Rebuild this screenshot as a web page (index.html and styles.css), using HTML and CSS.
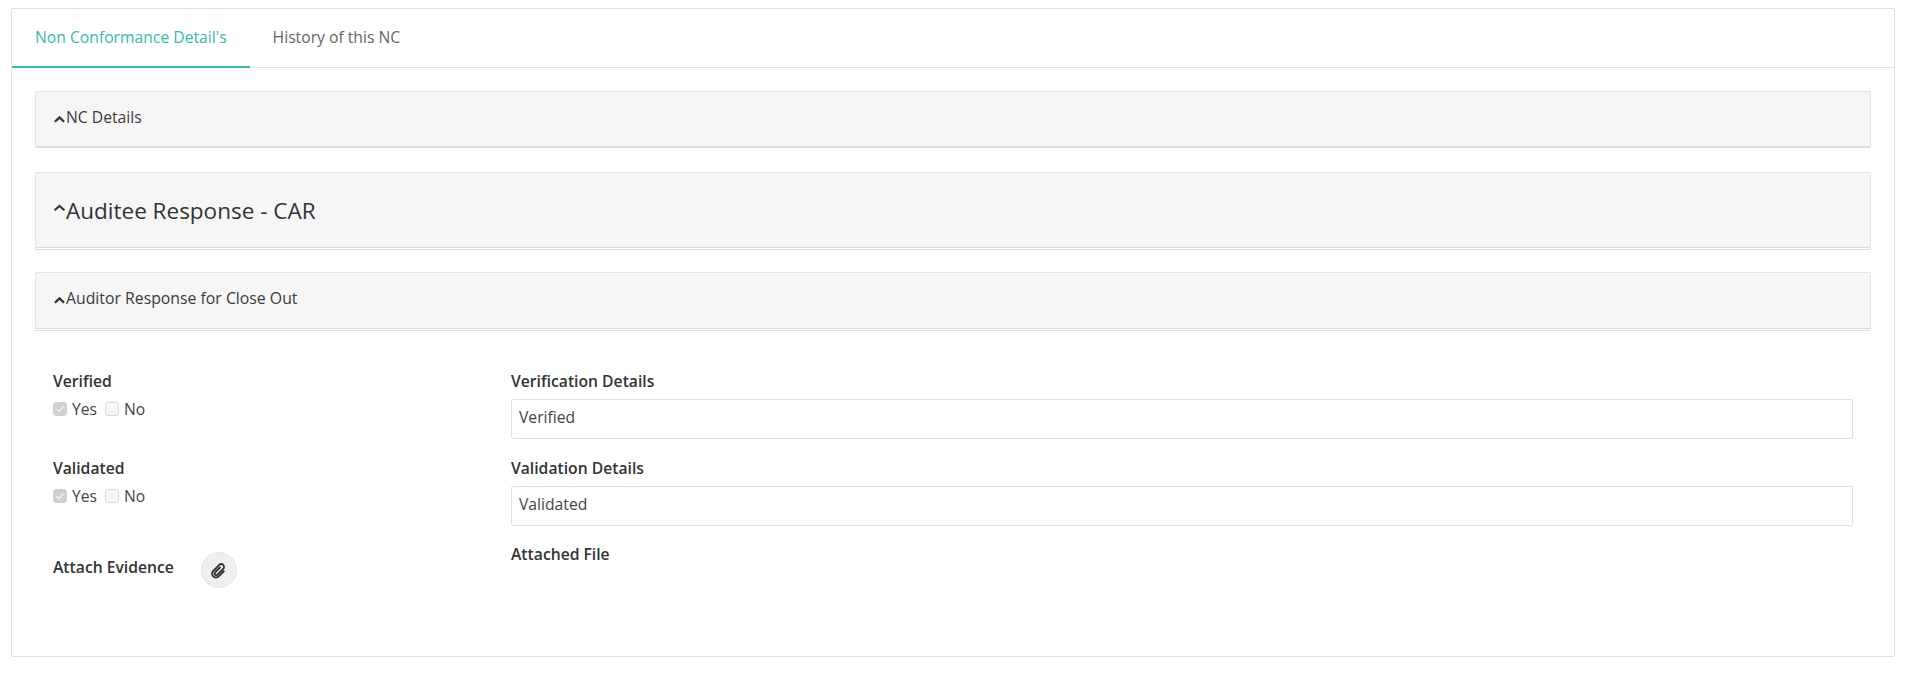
FILE: index.html
```html
<!DOCTYPE html>
<html lang="en">
<head>
<meta charset="utf-8">
<title>Non Conformance</title>
<link rel="stylesheet" href="styles.css">
</head>
<body>
<main class="card">
  <nav class="tabs">
    <a class="tab tab-active">Non Conformance Detail's</a>
    <a class="tab">History of this NC</a>
  </nav>
  <div class="content">
    <section class="panel panel-small">
      <svg class="chev" viewBox="0 0 12 8"><path d="M6 0.8 11.4 6 9.8 7.5 6 3.9 2.2 7.5 0.6 6z"/></svg><span>NC Details</span>
    </section>
    <section class="panel panel-large panel-double">
      <svg class="chev" viewBox="0 0 12 8"><path d="M6 0.4 11.6 5.4 10.2 6.9 6 3.2 1.8 6.9 0.4 5.4z"/></svg><span>Auditee Response - CAR</span>
    </section>
    <section class="panel panel-third panel-double">
      <svg class="chev" viewBox="0 0 12 8"><path d="M6 0.8 11.4 6 9.8 7.5 6 3.9 2.2 7.5 0.6 6z"/></svg><span>Auditor Response for Close Out</span>
    </section>
    <form class="form">
      <div class="form-left">
        <div class="group">
          <div class="label">Verified</div>
          <div class="checks">
            <label class="check"><span class="box box-on"><svg viewBox="0 0 14 14"><path d="M3 7.2 6 10 11 3.8" /></svg></span>Yes</label>
            <label class="check"><span class="box"></span>No</label>
          </div>
        </div>
        <div class="group">
          <div class="label">Validated</div>
          <div class="checks">
            <label class="check"><span class="box box-on"><svg viewBox="0 0 14 14"><path d="M3 7.2 6 10 11 3.8" /></svg></span>Yes</label>
            <label class="check"><span class="box"></span>No</label>
          </div>
        </div>
        <div class="attach">
          <div class="label">Attach Evidence</div>
          <button class="clip" type="button" aria-label="Attach">
            <svg viewBox="0 0 16 16"><path transform="rotate(45 8 8)" d="M7 5v6.5a1.5 1.5 0 0 0 3 0V3.8a2.6 2.6 0 0 0-5.2 0v8a3.6 3.6 0 0 0 7.2 0V5"/></svg>
          </button>
        </div>
      </div>
      <div class="form-right">
        <div class="group">
          <div class="label">Verification Details</div>
          <div class="input">Verified</div>
        </div>
        <div class="group">
          <div class="label">Validation Details</div>
          <div class="input">Validated</div>
        </div>
        <div class="label label-file">Attached File</div>
      </div>
    </form>
  </div>
</main>
</body>
</html>
```
FILE: styles.css
```css
* { box-sizing: border-box; }
html, body { margin: 0; background: #fff; }
body {
  padding: 8px 11px 24px;
  font-family: "Open Sans", sans-serif;
  font-size: 15.7px;
  line-height: 20px;
  color: #333;
}
.card {
  height: 649px;
  border: 1px solid #e0e0e0;
  border-radius: 2px;
}
.tabs {
  display: flex;
  height: 59px;
  border-bottom: 1px solid #e0e0e0;
}
.tab {
  height: 59px;
  padding: 18px 23px 0;
  color: #666;
}
.tab-active {
  color: #37bca7;
  border-bottom: 2px solid #37bca7;
}
.content {
  padding: 23px 23px 0;
  display: flex;
  flex-direction: column;
}
.panel {
  display: flex;
  align-items: center;
  margin-bottom: 24px;
  padding: 0 17px 5px 17px;
  background: #f6f6f6;
  border: 1px solid #e4e4e4;
  border-bottom-color: #dcdcdc;
  border-radius: 2px;
  color: #3a3a3a;
}
.panel-small { height: 57px; border-bottom-width: 2px; }
.panel-large {
  height: 78px;
  margin-bottom: 22px;
  padding-bottom: 0;
  font-size: 22.5px;
  color: #333;
}
.panel-third { height: 59px; margin-bottom: 0; padding-bottom: 7px; font-size: 15.8px; }
.panel-double { box-shadow: inset 0 -1px 0 #fff, inset 0 -2px 0 #dcdcdc; }
.chev {
  width: 13px;
  height: 8px;
  margin-top: 4px;
  fill: #333;
}
.panel-large .chev { margin-top: -6px; }
.form {
  display: grid;
  grid-template-columns: 458px 1342px;
  padding: 40px 18px 0;
}
.group { height: 87px; }
.label {
  font-weight: 600;
  line-height: 20px;
  height: 28px;
  color: #333;
}
.form-right .label { height: 28px; }
.form-right .label-file { margin-top: -1px; }
.checks {
  display: flex;
  gap: 8px;
  color: #444;
}
.check { display: flex; align-items: center; gap: 5px; }
.box {
  width: 14px;
  height: 14px;
  border: 1px solid #dcdcdc;
  border-radius: 3px;
  background: #f7f7f7;
  display: block;
}
.box-on { background: #cfcfcf; border-color: #cfcfcf; }
.box svg {
  display: block;
  width: 12px;
  height: 12px;
  fill: none;
  stroke: #efefef;
  stroke-width: 2;
}
.input {
  height: 40px;
  line-height: 35px;
  padding: 0 7px;
  border: 1px solid #e0e0e0;
  border-radius: 2px;
  color: #444;
}
.attach {
  display: flex;
  gap: 27px;
  align-items: flex-start;
  padding-top: 7px;
}
.attach .label { margin-top: 5px; }
.clip {
  width: 36px;
  height: 36px;
  padding: 0;
  border: 1px solid #e6e6e6;
  border-radius: 50%;
  background: #efefef;
  display: flex;
  align-items: center;
  justify-content: center;
}
.clip svg {
  width: 17px;
  height: 17px;
  fill: none;
  stroke: #333;
  stroke-width: 1.8;
  stroke-linecap: round;
}
```
